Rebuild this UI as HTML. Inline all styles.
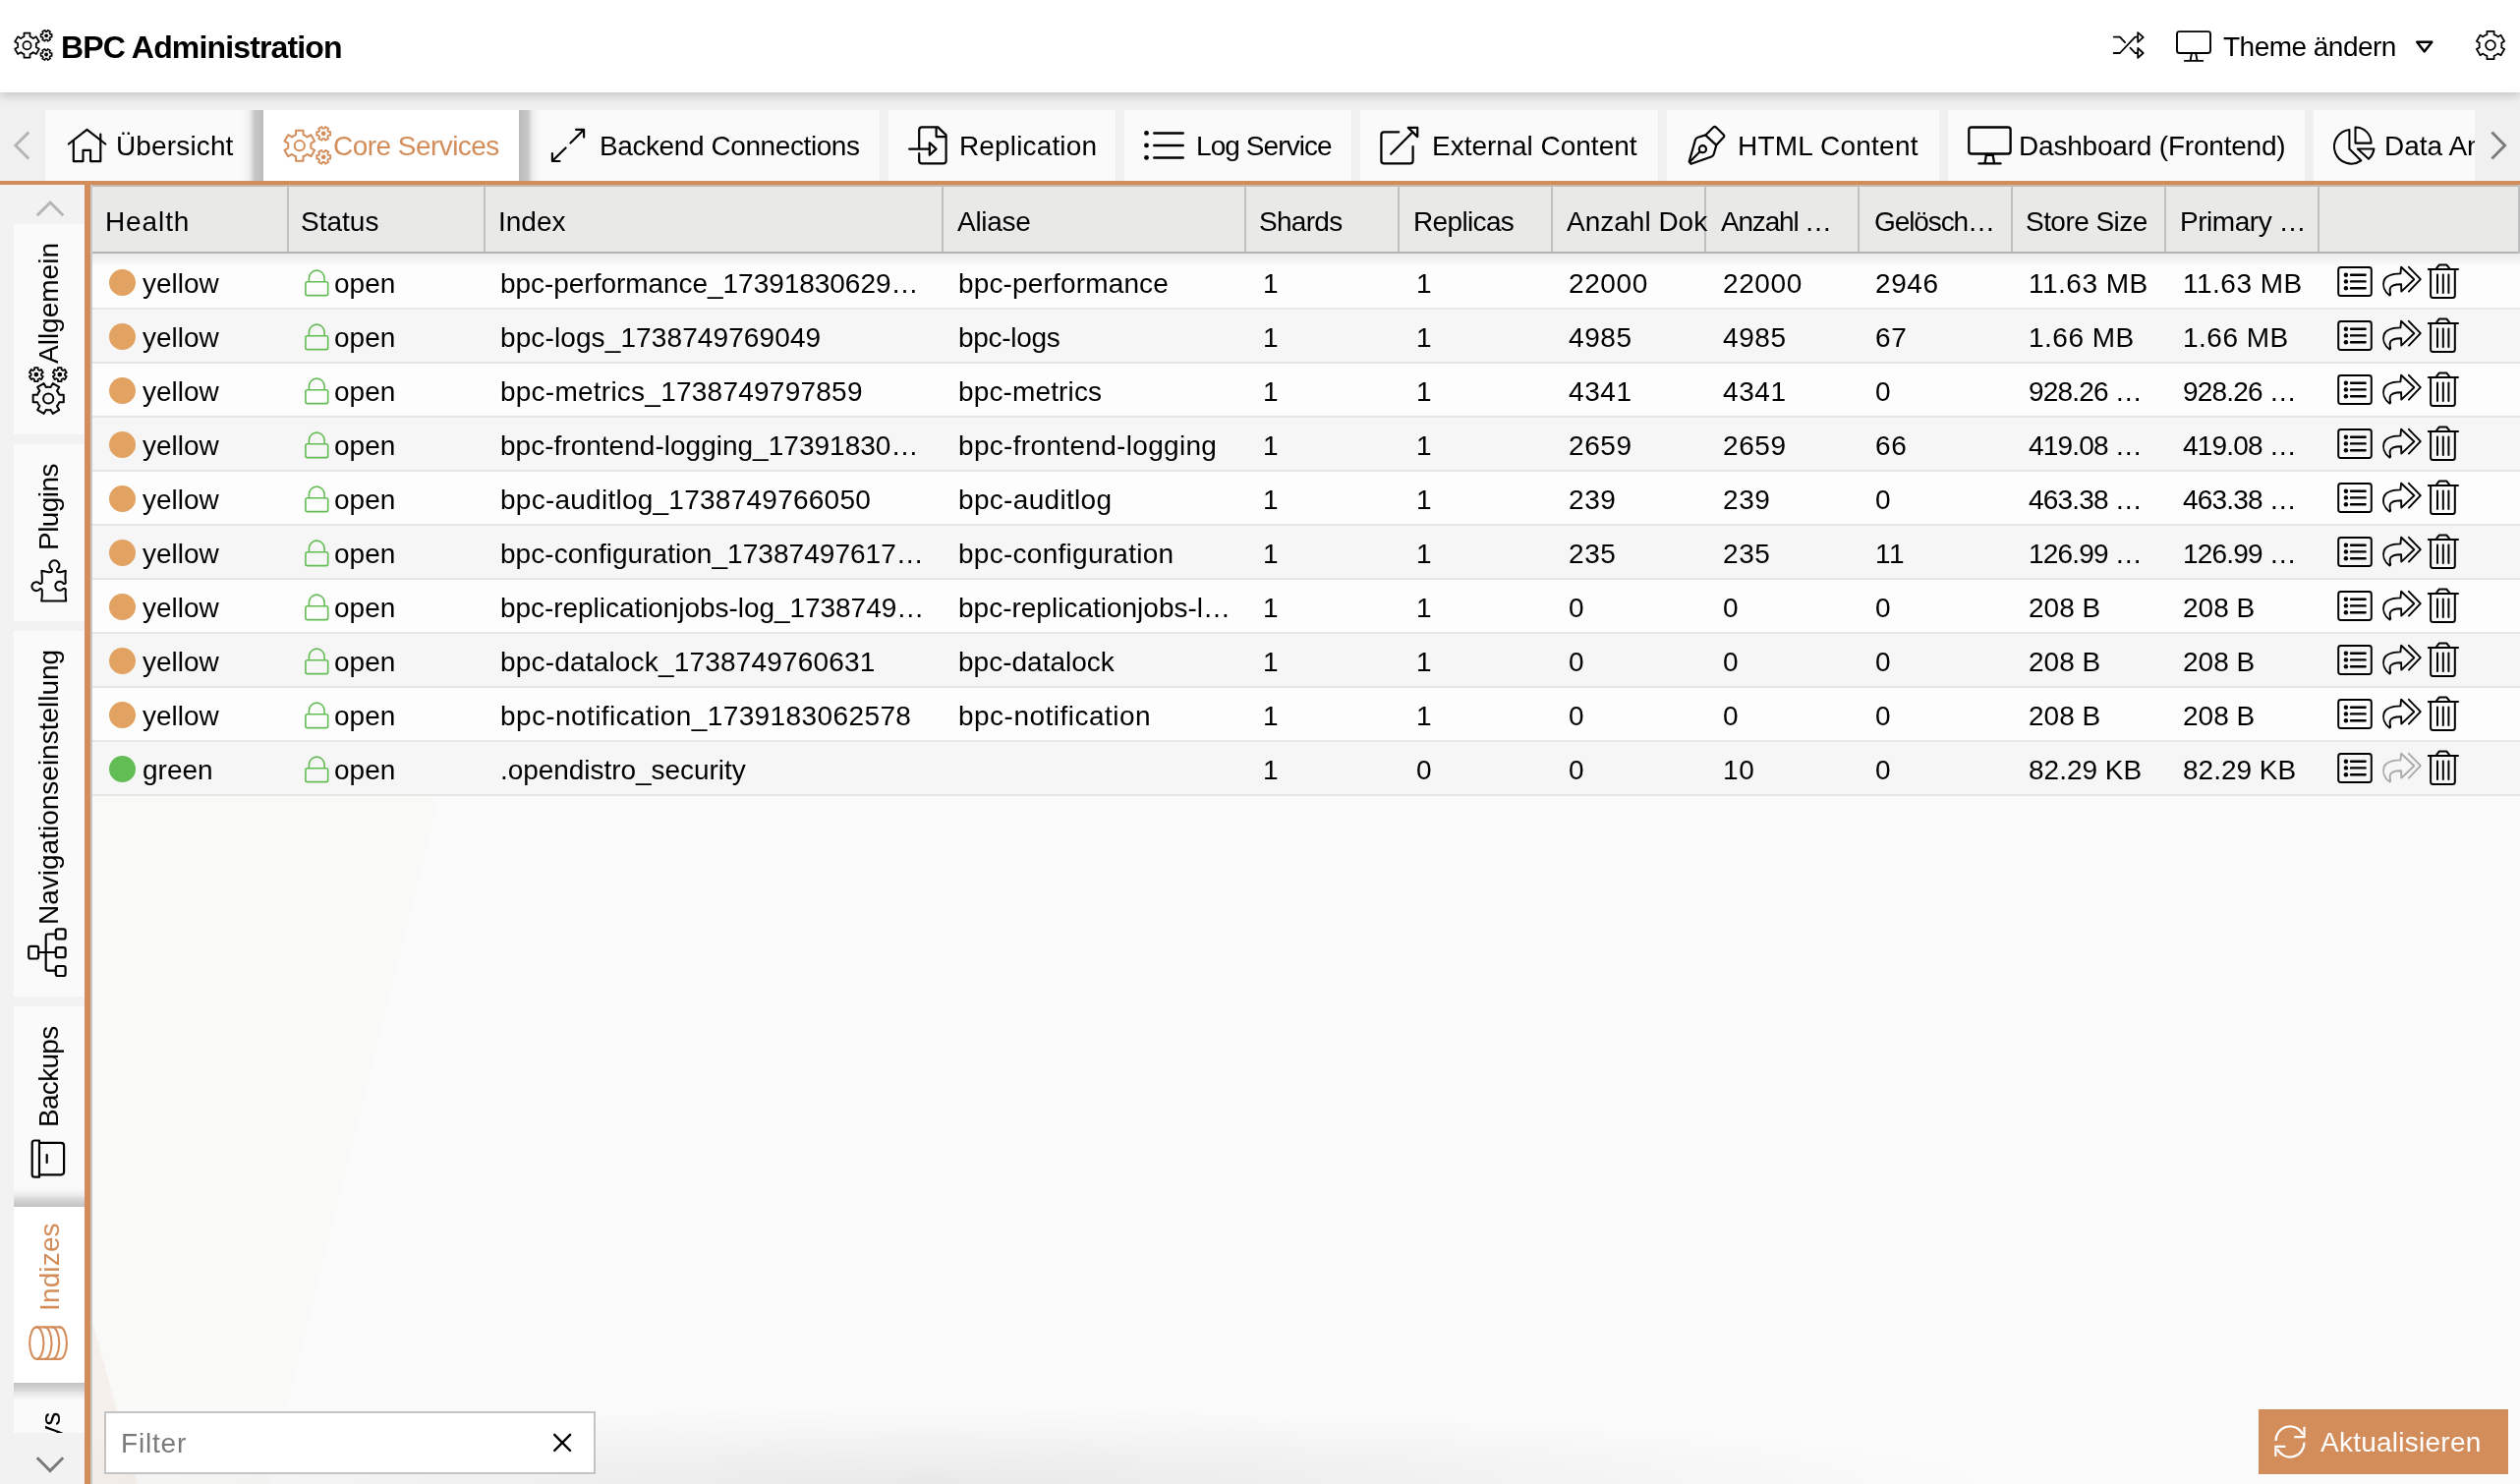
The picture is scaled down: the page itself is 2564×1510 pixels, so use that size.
<!DOCTYPE html>
<html><head><meta charset="utf-8"><style>
html,body{margin:0;padding:0;width:2564px;height:1510px;overflow:hidden;background:#fff;font-family:"Liberation Sans", sans-serif;}
body{position:relative}
div{will-change:transform}
</style></head><body>
<div style="position:absolute;left:0;top:0;width:2564px;height:94px;background:#fff;z-index:3;box-shadow:0 3px 10px rgba(0,0,0,0.2)"></div>
<div style="position:absolute;left:0;top:0;width:2564px;height:94px;z-index:4">
<div style="position:absolute;left:62px;top:31.5px;font-size:32px;line-height:32px;color:#000;font-weight:bold;white-space:nowrap;letter-spacing:-0.85px">BPC Administration</div>
<div style="position:absolute;left:2262px;top:34.3px;font-size:28px;line-height:28px;color:#000;font-weight:normal;white-space:nowrap;letter-spacing:-0.52px">Theme ändern</div>
</div>
<div style="position:absolute;left:0;top:94px;width:2564px;height:90px;background:#f0f0f0;z-index:1"></div>
<div style="position:absolute;left:0;top:94px;width:2564px;height:90px;z-index:2;overflow:hidden">
<div style="position:absolute;left:46px;top:18px;width:212px;height:72px;background:#fafafa;overflow:hidden">
<div style="position:absolute;left:72.0px;top:22.9px;font-size:28px;line-height:28px;color:#000;font-weight:normal;white-space:nowrap;letter-spacing:0.14px">Übersicht</div>
</div>
<div style="position:absolute;left:268px;top:18px;width:260px;height:72px;background:#fff;overflow:hidden">
<div style="position:absolute;left:70.5px;top:22.9px;font-size:28px;line-height:28px;color:#d38d5a;font-weight:normal;white-space:nowrap;letter-spacing:-0.54px">Core Services</div>
</div>
<div style="position:absolute;left:538px;top:18px;width:357px;height:72px;background:#fafafa;overflow:hidden">
<div style="position:absolute;left:71.5px;top:22.9px;font-size:28px;line-height:28px;color:#000;font-weight:normal;white-space:nowrap;letter-spacing:-0.41px">Backend Connections</div>
</div>
<div style="position:absolute;left:904px;top:18px;width:231px;height:72px;background:#fafafa;overflow:hidden">
<div style="position:absolute;left:71.5px;top:22.9px;font-size:28px;line-height:28px;color:#000;font-weight:normal;white-space:nowrap;letter-spacing:0.15px">Replication</div>
</div>
<div style="position:absolute;left:1144px;top:18px;width:231px;height:72px;background:#fafafa;overflow:hidden">
<div style="position:absolute;left:72.5px;top:22.9px;font-size:28px;line-height:28px;color:#000;font-weight:normal;white-space:nowrap;letter-spacing:-0.92px">Log Service</div>
</div>
<div style="position:absolute;left:1384px;top:18px;width:303px;height:72px;background:#fafafa;overflow:hidden">
<div style="position:absolute;left:72.5px;top:22.9px;font-size:28px;line-height:28px;color:#000;font-weight:normal;white-space:nowrap;letter-spacing:0.0px">External Content</div>
</div>
<div style="position:absolute;left:1696px;top:18px;width:277px;height:72px;background:#fafafa;overflow:hidden">
<div style="position:absolute;left:71.5px;top:22.9px;font-size:28px;line-height:28px;color:#000;font-weight:normal;white-space:nowrap;letter-spacing:0.22px">HTML Content</div>
</div>
<div style="position:absolute;left:1982px;top:18px;width:363px;height:72px;background:#fafafa;overflow:hidden">
<div style="position:absolute;left:71.5px;top:22.9px;font-size:28px;line-height:28px;color:#000;font-weight:normal;white-space:nowrap;letter-spacing:-0.2px">Dashboard (Frontend)</div>
</div>
<div style="position:absolute;left:2354px;top:18px;width:164px;height:72px;background:#fafafa;overflow:hidden">
<div style="position:absolute;left:71.5px;top:22.9px;font-size:28px;line-height:28px;color:#000;font-weight:normal;white-space:nowrap;letter-spacing:0px">Data Analytics</div>
</div>
<div style="position:absolute;left:246px;top:18px;width:22px;height:72px;background:linear-gradient(to left,rgba(0,0,0,0.22),rgba(0,0,0,0.16) 10px,rgba(0,0,0,0.05) 14px,rgba(0,0,0,0.0) 22px)"></div>
<div style="position:absolute;left:528px;top:18px;width:22px;height:72px;background:linear-gradient(to right,rgba(0,0,0,0.22),rgba(0,0,0,0.16) 10px,rgba(0,0,0,0.05) 14px,rgba(0,0,0,0.0) 22px)"></div>
</div>
<div style="position:absolute;left:0;top:184px;width:2564px;height:4px;background:#d38d5a;z-index:2"></div>
<div style="position:absolute;left:0;top:188px;width:86px;height:1322px;background:#f2f2f2"></div>
<div style="position:absolute;left:86px;top:188px;width:6px;height:1322px;background:#d38d5a"></div>
<div style="position:absolute;left:14px;top:228px;width:72px;height:214px;background:#fafafa;overflow:hidden">
</div>
<div style="position:absolute;left:14px;top:452px;width:72px;height:180px;background:#fafafa;overflow:hidden">
</div>
<div style="position:absolute;left:14px;top:642px;width:72px;height:372px;background:#fafafa;overflow:hidden">
</div>
<div style="position:absolute;left:14px;top:1024px;width:72px;height:194px;background:#fafafa;overflow:hidden">
</div>
<div style="position:absolute;left:14px;top:1228px;width:72px;height:179px;background:#fff;overflow:hidden">
</div>
<div style="position:absolute;left:14px;top:1416px;width:72px;height:42px;background:#fafafa;overflow:hidden">
</div>
<div style="position:absolute;left:14px;top:1210px;width:72px;height:18px;background:linear-gradient(to top,rgba(0,0,0,0.2),rgba(0,0,0,0.11) 40%,rgba(0,0,0,0))"></div>
<div style="position:absolute;left:14px;top:1407px;width:72px;height:18px;background:linear-gradient(to bottom,rgba(0,0,0,0.2),rgba(0,0,0,0.11) 40%,rgba(0,0,0,0))"></div>
<div style="position:absolute;left:36.3px;top:370px;font-size:28px;line-height:28px;color:#000;white-space:nowrap;transform-origin:0 0;transform:rotate(-90deg);">Allgemein</div>
<div style="position:absolute;left:36.3px;top:559.5px;font-size:28px;line-height:28px;color:#000;white-space:nowrap;transform-origin:0 0;transform:rotate(-90deg);letter-spacing:-0.55px">Plugins</div>
<div style="position:absolute;left:36.3px;top:940.5px;font-size:28px;line-height:28px;color:#000;white-space:nowrap;transform-origin:0 0;transform:rotate(-90deg);">Navigationseinstellung</div>
<div style="position:absolute;left:36.3px;top:1146.5px;font-size:28px;line-height:28px;color:#000;white-space:nowrap;transform-origin:0 0;transform:rotate(-90deg);letter-spacing:-0.7px">Backups</div>
<div style="position:absolute;left:37.3px;top:1333.5px;font-size:28px;line-height:28px;color:#d38d5a;white-space:nowrap;transform-origin:0 0;transform:rotate(-90deg);letter-spacing:0.15px">Indizes</div>
<div style="position:absolute;left:14px;top:1416px;width:72px;height:42px;overflow:hidden"><div style="position:absolute;left:23.8px;top:82.6px;font-size:28px;line-height:28px;color:#000;white-space:nowrap;transform-origin:0 0;transform:rotate(-90deg);">Keys</div></div>
<div style="position:absolute;left:92px;top:188px;width:2472px;height:1322px;background:#fbfbfb"></div>
<svg style="position:absolute;left:0;top:0" width="2564" height="1510"><polygon points="94,188 603,188 273,1510 94,1510" fill="#f9f9f7"/><polygon points="94,1345 140,1510 94,1510" fill="#f5f0ec"/></svg>
<div style="position:absolute;left:94px;top:1420px;width:2470px;height:90px;background:radial-gradient(ellipse 1100px 80px at 850px 100%,rgba(0,0,0,0.07),rgba(0,0,0,0))"></div>
<div style="position:absolute;left:92px;top:188px;width:2px;height:1322px;background:#c8c8c8"></div>
<div style="position:absolute;left:94px;top:188px;width:2470px;height:68px;background:#e9e9e8;border-top:2px solid #c4b8ac;box-sizing:border-box"></div>
<div style="position:absolute;left:94px;top:258px;width:2470px;height:57px;background:#fdfdfd;border-bottom:2px solid #e6e6e6;box-sizing:border-box"></div>
<div style="position:absolute;left:94px;top:315px;width:2470px;height:55px;background:#f6f6f6;border-bottom:2px solid #e6e6e6;box-sizing:border-box"></div>
<div style="position:absolute;left:94px;top:370px;width:2470px;height:55px;background:#fdfdfd;border-bottom:2px solid #e6e6e6;box-sizing:border-box"></div>
<div style="position:absolute;left:94px;top:425px;width:2470px;height:55px;background:#f6f6f6;border-bottom:2px solid #e6e6e6;box-sizing:border-box"></div>
<div style="position:absolute;left:94px;top:480px;width:2470px;height:55px;background:#fdfdfd;border-bottom:2px solid #e6e6e6;box-sizing:border-box"></div>
<div style="position:absolute;left:94px;top:535px;width:2470px;height:55px;background:#f6f6f6;border-bottom:2px solid #e6e6e6;box-sizing:border-box"></div>
<div style="position:absolute;left:94px;top:590px;width:2470px;height:55px;background:#fdfdfd;border-bottom:2px solid #e6e6e6;box-sizing:border-box"></div>
<div style="position:absolute;left:94px;top:645px;width:2470px;height:55px;background:#f6f6f6;border-bottom:2px solid #e6e6e6;box-sizing:border-box"></div>
<div style="position:absolute;left:94px;top:700px;width:2470px;height:55px;background:#fdfdfd;border-bottom:2px solid #e6e6e6;box-sizing:border-box"></div>
<div style="position:absolute;left:94px;top:755px;width:2470px;height:55px;background:#f6f6f6;border-bottom:2px solid #e6e6e6;box-sizing:border-box"></div>
<div style="position:absolute;left:94px;top:258px;width:2470px;height:14px;background:linear-gradient(to bottom,rgba(0,0,0,0.07),rgba(0,0,0,0))"></div>
<div style="position:absolute;left:94px;top:256px;width:2470px;height:2px;background:#b4b4b4"></div>
<div style="position:absolute;left:2562px;top:188px;width:2px;height:70px;background:#c0c0c0"></div>
<div style="position:absolute;left:292px;top:190px;width:2px;height:66px;background:#c0c0c0"></div>
<div style="position:absolute;left:492px;top:190px;width:2px;height:66px;background:#c0c0c0"></div>
<div style="position:absolute;left:958px;top:190px;width:2px;height:66px;background:#c0c0c0"></div>
<div style="position:absolute;left:1266px;top:190px;width:2px;height:66px;background:#c0c0c0"></div>
<div style="position:absolute;left:1422px;top:190px;width:2px;height:66px;background:#c0c0c0"></div>
<div style="position:absolute;left:1578px;top:190px;width:2px;height:66px;background:#c0c0c0"></div>
<div style="position:absolute;left:1734px;top:190px;width:2px;height:66px;background:#c0c0c0"></div>
<div style="position:absolute;left:1890px;top:190px;width:2px;height:66px;background:#c0c0c0"></div>
<div style="position:absolute;left:2046px;top:190px;width:2px;height:66px;background:#c0c0c0"></div>
<div style="position:absolute;left:2202px;top:190px;width:2px;height:66px;background:#c0c0c0"></div>
<div style="position:absolute;left:2358px;top:190px;width:2px;height:66px;background:#c0c0c0"></div>
<div style="position:absolute;left:106.8px;top:212.3px;font-size:28px;line-height:28px;color:#000;font-weight:normal;white-space:nowrap;letter-spacing:0.9px">Health</div>
<div style="position:absolute;left:306.0px;top:212.3px;font-size:28px;line-height:28px;color:#000;font-weight:normal;white-space:nowrap;letter-spacing:0px">Status</div>
<div style="position:absolute;left:506.6px;top:212.3px;font-size:28px;line-height:28px;color:#000;font-weight:normal;white-space:nowrap;letter-spacing:0px">Index</div>
<div style="position:absolute;left:973.7px;top:212.3px;font-size:28px;line-height:28px;color:#000;font-weight:normal;white-space:nowrap;letter-spacing:-0.3px">Aliase</div>
<div style="position:absolute;left:1281.3px;top:212.3px;font-size:28px;line-height:28px;color:#000;font-weight:normal;white-space:nowrap;letter-spacing:-0.7px">Shards</div>
<div style="position:absolute;left:1437.5px;top:212.3px;font-size:28px;line-height:28px;color:#000;font-weight:normal;white-space:nowrap;letter-spacing:-0.65px">Replicas</div>
<div style="position:absolute;left:1594.2px;top:212.3px;font-size:28px;line-height:28px;color:#000;font-weight:normal;white-space:nowrap;letter-spacing:0px">Anzahl Dok</div>
<div style="position:absolute;left:1750.6px;top:212.3px;font-size:28px;line-height:28px;color:#000;font-weight:normal;white-space:nowrap;letter-spacing:-1.2px">Anzahl …</div>
<div style="position:absolute;left:1906.8000000000002px;top:212.3px;font-size:28px;line-height:28px;color:#000;font-weight:normal;white-space:nowrap;letter-spacing:-1.1px">Gelösch…</div>
<div style="position:absolute;left:2061.3px;top:212.3px;font-size:28px;line-height:28px;color:#000;font-weight:normal;white-space:nowrap;letter-spacing:-0.55px">Store Size</div>
<div style="position:absolute;left:2218px;top:212.3px;font-size:28px;line-height:28px;color:#000;font-weight:normal;white-space:nowrap;letter-spacing:-0.45px">Primary …</div>
<div style="position:absolute;left:110.5px;top:274px;width:27px;height:27px;border-radius:50%;background:#e2a262"></div>
<div style="position:absolute;left:144.5px;top:275.3px;font-size:28px;line-height:28px;color:#000;font-weight:normal;white-space:nowrap;">yellow</div>
<div style="position:absolute;left:339.5px;top:275.3px;font-size:28px;line-height:28px;color:#000;font-weight:normal;white-space:nowrap;">open</div>
<div style="position:absolute;left:508.7px;top:275.3px;font-size:28px;line-height:28px;color:#000;font-weight:normal;white-space:nowrap;letter-spacing:-0.04px">bpc-performance_17391830629…</div>
<div style="position:absolute;left:975.4px;top:275.3px;font-size:28px;line-height:28px;color:#000;font-weight:normal;white-space:nowrap;letter-spacing:0.157px">bpc-performance</div>
<div style="position:absolute;left:1284.6px;top:275.3px;font-size:28px;line-height:28px;color:#000;font-weight:normal;white-space:nowrap;letter-spacing:0.6px">1</div>
<div style="position:absolute;left:1440.5px;top:275.3px;font-size:28px;line-height:28px;color:#000;font-weight:normal;white-space:nowrap;letter-spacing:0.6px">1</div>
<div style="position:absolute;left:1596.3px;top:275.3px;font-size:28px;line-height:28px;color:#000;font-weight:normal;white-space:nowrap;letter-spacing:0.6px">22000</div>
<div style="position:absolute;left:1752.5px;top:275.3px;font-size:28px;line-height:28px;color:#000;font-weight:normal;white-space:nowrap;letter-spacing:0.6px">22000</div>
<div style="position:absolute;left:1908.2px;top:275.3px;font-size:28px;line-height:28px;color:#000;font-weight:normal;white-space:nowrap;letter-spacing:0.6px">2946</div>
<div style="position:absolute;left:2064px;top:275.3px;font-size:28px;line-height:28px;color:#000;font-weight:normal;white-space:nowrap;letter-spacing:0.5px">11.63 MB</div>
<div style="position:absolute;left:2220.7px;top:275.3px;font-size:28px;line-height:28px;color:#000;font-weight:normal;white-space:nowrap;letter-spacing:0.5px">11.63 MB</div>
<div style="position:absolute;left:110.5px;top:329px;width:27px;height:27px;border-radius:50%;background:#e2a262"></div>
<div style="position:absolute;left:144.5px;top:330.3px;font-size:28px;line-height:28px;color:#000;font-weight:normal;white-space:nowrap;">yellow</div>
<div style="position:absolute;left:339.5px;top:330.3px;font-size:28px;line-height:28px;color:#000;font-weight:normal;white-space:nowrap;">open</div>
<div style="position:absolute;left:508.7px;top:330.3px;font-size:28px;line-height:28px;color:#000;font-weight:normal;white-space:nowrap;letter-spacing:0.11px">bpc-logs_1738749769049</div>
<div style="position:absolute;left:975.4px;top:330.3px;font-size:28px;line-height:28px;color:#000;font-weight:normal;white-space:nowrap;letter-spacing:-0.29px">bpc-logs</div>
<div style="position:absolute;left:1284.6px;top:330.3px;font-size:28px;line-height:28px;color:#000;font-weight:normal;white-space:nowrap;letter-spacing:0.6px">1</div>
<div style="position:absolute;left:1440.5px;top:330.3px;font-size:28px;line-height:28px;color:#000;font-weight:normal;white-space:nowrap;letter-spacing:0.6px">1</div>
<div style="position:absolute;left:1596.3px;top:330.3px;font-size:28px;line-height:28px;color:#000;font-weight:normal;white-space:nowrap;letter-spacing:0.6px">4985</div>
<div style="position:absolute;left:1752.5px;top:330.3px;font-size:28px;line-height:28px;color:#000;font-weight:normal;white-space:nowrap;letter-spacing:0.6px">4985</div>
<div style="position:absolute;left:1908.2px;top:330.3px;font-size:28px;line-height:28px;color:#000;font-weight:normal;white-space:nowrap;letter-spacing:0.6px">67</div>
<div style="position:absolute;left:2064px;top:330.3px;font-size:28px;line-height:28px;color:#000;font-weight:normal;white-space:nowrap;letter-spacing:0.5px">1.66 MB</div>
<div style="position:absolute;left:2220.7px;top:330.3px;font-size:28px;line-height:28px;color:#000;font-weight:normal;white-space:nowrap;letter-spacing:0.5px">1.66 MB</div>
<div style="position:absolute;left:110.5px;top:384px;width:27px;height:27px;border-radius:50%;background:#e2a262"></div>
<div style="position:absolute;left:144.5px;top:385.3px;font-size:28px;line-height:28px;color:#000;font-weight:normal;white-space:nowrap;">yellow</div>
<div style="position:absolute;left:339.5px;top:385.3px;font-size:28px;line-height:28px;color:#000;font-weight:normal;white-space:nowrap;">open</div>
<div style="position:absolute;left:508.7px;top:385.3px;font-size:28px;line-height:28px;color:#000;font-weight:normal;white-space:nowrap;letter-spacing:0.24px">bpc-metrics_1738749797859</div>
<div style="position:absolute;left:975.4px;top:385.3px;font-size:28px;line-height:28px;color:#000;font-weight:normal;white-space:nowrap;letter-spacing:0.14px">bpc-metrics</div>
<div style="position:absolute;left:1284.6px;top:385.3px;font-size:28px;line-height:28px;color:#000;font-weight:normal;white-space:nowrap;letter-spacing:0.6px">1</div>
<div style="position:absolute;left:1440.5px;top:385.3px;font-size:28px;line-height:28px;color:#000;font-weight:normal;white-space:nowrap;letter-spacing:0.6px">1</div>
<div style="position:absolute;left:1596.3px;top:385.3px;font-size:28px;line-height:28px;color:#000;font-weight:normal;white-space:nowrap;letter-spacing:0.6px">4341</div>
<div style="position:absolute;left:1752.5px;top:385.3px;font-size:28px;line-height:28px;color:#000;font-weight:normal;white-space:nowrap;letter-spacing:0.6px">4341</div>
<div style="position:absolute;left:1908.2px;top:385.3px;font-size:28px;line-height:28px;color:#000;font-weight:normal;white-space:nowrap;letter-spacing:0.6px">0</div>
<div style="position:absolute;left:2064px;top:385.3px;font-size:28px;line-height:28px;color:#000;font-weight:normal;white-space:nowrap;letter-spacing:-0.8px">928.26 …</div>
<div style="position:absolute;left:2220.7px;top:385.3px;font-size:28px;line-height:28px;color:#000;font-weight:normal;white-space:nowrap;letter-spacing:-0.8px">928.26 …</div>
<div style="position:absolute;left:110.5px;top:439px;width:27px;height:27px;border-radius:50%;background:#e2a262"></div>
<div style="position:absolute;left:144.5px;top:440.3px;font-size:28px;line-height:28px;color:#000;font-weight:normal;white-space:nowrap;">yellow</div>
<div style="position:absolute;left:339.5px;top:440.3px;font-size:28px;line-height:28px;color:#000;font-weight:normal;white-space:nowrap;">open</div>
<div style="position:absolute;left:508.7px;top:440.3px;font-size:28px;line-height:28px;color:#000;font-weight:normal;white-space:nowrap;letter-spacing:0.014px">bpc-frontend-logging_17391830…</div>
<div style="position:absolute;left:975.4px;top:440.3px;font-size:28px;line-height:28px;color:#000;font-weight:normal;white-space:nowrap;letter-spacing:0.32px">bpc-frontend-logging</div>
<div style="position:absolute;left:1284.6px;top:440.3px;font-size:28px;line-height:28px;color:#000;font-weight:normal;white-space:nowrap;letter-spacing:0.6px">1</div>
<div style="position:absolute;left:1440.5px;top:440.3px;font-size:28px;line-height:28px;color:#000;font-weight:normal;white-space:nowrap;letter-spacing:0.6px">1</div>
<div style="position:absolute;left:1596.3px;top:440.3px;font-size:28px;line-height:28px;color:#000;font-weight:normal;white-space:nowrap;letter-spacing:0.6px">2659</div>
<div style="position:absolute;left:1752.5px;top:440.3px;font-size:28px;line-height:28px;color:#000;font-weight:normal;white-space:nowrap;letter-spacing:0.6px">2659</div>
<div style="position:absolute;left:1908.2px;top:440.3px;font-size:28px;line-height:28px;color:#000;font-weight:normal;white-space:nowrap;letter-spacing:0.6px">66</div>
<div style="position:absolute;left:2064px;top:440.3px;font-size:28px;line-height:28px;color:#000;font-weight:normal;white-space:nowrap;letter-spacing:-0.8px">419.08 …</div>
<div style="position:absolute;left:2220.7px;top:440.3px;font-size:28px;line-height:28px;color:#000;font-weight:normal;white-space:nowrap;letter-spacing:-0.8px">419.08 …</div>
<div style="position:absolute;left:110.5px;top:494px;width:27px;height:27px;border-radius:50%;background:#e2a262"></div>
<div style="position:absolute;left:144.5px;top:495.3px;font-size:28px;line-height:28px;color:#000;font-weight:normal;white-space:nowrap;">yellow</div>
<div style="position:absolute;left:339.5px;top:495.3px;font-size:28px;line-height:28px;color:#000;font-weight:normal;white-space:nowrap;">open</div>
<div style="position:absolute;left:508.7px;top:495.3px;font-size:28px;line-height:28px;color:#000;font-weight:normal;white-space:nowrap;letter-spacing:0.25px">bpc-auditlog_1738749766050</div>
<div style="position:absolute;left:975.4px;top:495.3px;font-size:28px;line-height:28px;color:#000;font-weight:normal;white-space:nowrap;letter-spacing:0.32px">bpc-auditlog</div>
<div style="position:absolute;left:1284.6px;top:495.3px;font-size:28px;line-height:28px;color:#000;font-weight:normal;white-space:nowrap;letter-spacing:0.6px">1</div>
<div style="position:absolute;left:1440.5px;top:495.3px;font-size:28px;line-height:28px;color:#000;font-weight:normal;white-space:nowrap;letter-spacing:0.6px">1</div>
<div style="position:absolute;left:1596.3px;top:495.3px;font-size:28px;line-height:28px;color:#000;font-weight:normal;white-space:nowrap;letter-spacing:0.6px">239</div>
<div style="position:absolute;left:1752.5px;top:495.3px;font-size:28px;line-height:28px;color:#000;font-weight:normal;white-space:nowrap;letter-spacing:0.6px">239</div>
<div style="position:absolute;left:1908.2px;top:495.3px;font-size:28px;line-height:28px;color:#000;font-weight:normal;white-space:nowrap;letter-spacing:0.6px">0</div>
<div style="position:absolute;left:2064px;top:495.3px;font-size:28px;line-height:28px;color:#000;font-weight:normal;white-space:nowrap;letter-spacing:-0.8px">463.38 …</div>
<div style="position:absolute;left:2220.7px;top:495.3px;font-size:28px;line-height:28px;color:#000;font-weight:normal;white-space:nowrap;letter-spacing:-0.8px">463.38 …</div>
<div style="position:absolute;left:110.5px;top:549px;width:27px;height:27px;border-radius:50%;background:#e2a262"></div>
<div style="position:absolute;left:144.5px;top:550.3px;font-size:28px;line-height:28px;color:#000;font-weight:normal;white-space:nowrap;">yellow</div>
<div style="position:absolute;left:339.5px;top:550.3px;font-size:28px;line-height:28px;color:#000;font-weight:normal;white-space:nowrap;">open</div>
<div style="position:absolute;left:508.7px;top:550.3px;font-size:28px;line-height:28px;color:#000;font-weight:normal;white-space:nowrap;letter-spacing:0.04px">bpc-configuration_17387497617…</div>
<div style="position:absolute;left:975.4px;top:550.3px;font-size:28px;line-height:28px;color:#000;font-weight:normal;white-space:nowrap;letter-spacing:0.27px">bpc-configuration</div>
<div style="position:absolute;left:1284.6px;top:550.3px;font-size:28px;line-height:28px;color:#000;font-weight:normal;white-space:nowrap;letter-spacing:0.6px">1</div>
<div style="position:absolute;left:1440.5px;top:550.3px;font-size:28px;line-height:28px;color:#000;font-weight:normal;white-space:nowrap;letter-spacing:0.6px">1</div>
<div style="position:absolute;left:1596.3px;top:550.3px;font-size:28px;line-height:28px;color:#000;font-weight:normal;white-space:nowrap;letter-spacing:0.6px">235</div>
<div style="position:absolute;left:1752.5px;top:550.3px;font-size:28px;line-height:28px;color:#000;font-weight:normal;white-space:nowrap;letter-spacing:0.6px">235</div>
<div style="position:absolute;left:1908.2px;top:550.3px;font-size:28px;line-height:28px;color:#000;font-weight:normal;white-space:nowrap;letter-spacing:0.6px">11</div>
<div style="position:absolute;left:2064px;top:550.3px;font-size:28px;line-height:28px;color:#000;font-weight:normal;white-space:nowrap;letter-spacing:-0.8px">126.99 …</div>
<div style="position:absolute;left:2220.7px;top:550.3px;font-size:28px;line-height:28px;color:#000;font-weight:normal;white-space:nowrap;letter-spacing:-0.8px">126.99 …</div>
<div style="position:absolute;left:110.5px;top:604px;width:27px;height:27px;border-radius:50%;background:#e2a262"></div>
<div style="position:absolute;left:144.5px;top:605.3px;font-size:28px;line-height:28px;color:#000;font-weight:normal;white-space:nowrap;">yellow</div>
<div style="position:absolute;left:339.5px;top:605.3px;font-size:28px;line-height:28px;color:#000;font-weight:normal;white-space:nowrap;">open</div>
<div style="position:absolute;left:508.7px;top:605.3px;font-size:28px;line-height:28px;color:#000;font-weight:normal;white-space:nowrap;letter-spacing:-0.05px">bpc-replicationjobs-log_1738749…</div>
<div style="position:absolute;left:975.4px;top:605.3px;font-size:28px;line-height:28px;color:#000;font-weight:normal;white-space:nowrap;letter-spacing:0px">bpc-replicationjobs-l…</div>
<div style="position:absolute;left:1284.6px;top:605.3px;font-size:28px;line-height:28px;color:#000;font-weight:normal;white-space:nowrap;letter-spacing:0.6px">1</div>
<div style="position:absolute;left:1440.5px;top:605.3px;font-size:28px;line-height:28px;color:#000;font-weight:normal;white-space:nowrap;letter-spacing:0.6px">1</div>
<div style="position:absolute;left:1596.3px;top:605.3px;font-size:28px;line-height:28px;color:#000;font-weight:normal;white-space:nowrap;letter-spacing:0.6px">0</div>
<div style="position:absolute;left:1752.5px;top:605.3px;font-size:28px;line-height:28px;color:#000;font-weight:normal;white-space:nowrap;letter-spacing:0.6px">0</div>
<div style="position:absolute;left:1908.2px;top:605.3px;font-size:28px;line-height:28px;color:#000;font-weight:normal;white-space:nowrap;letter-spacing:0.6px">0</div>
<div style="position:absolute;left:2064px;top:605.3px;font-size:28px;line-height:28px;color:#000;font-weight:normal;white-space:nowrap;letter-spacing:0px">208 B</div>
<div style="position:absolute;left:2220.7px;top:605.3px;font-size:28px;line-height:28px;color:#000;font-weight:normal;white-space:nowrap;letter-spacing:0px">208 B</div>
<div style="position:absolute;left:110.5px;top:659px;width:27px;height:27px;border-radius:50%;background:#e2a262"></div>
<div style="position:absolute;left:144.5px;top:660.3px;font-size:28px;line-height:28px;color:#000;font-weight:normal;white-space:nowrap;">yellow</div>
<div style="position:absolute;left:339.5px;top:660.3px;font-size:28px;line-height:28px;color:#000;font-weight:normal;white-space:nowrap;">open</div>
<div style="position:absolute;left:508.7px;top:660.3px;font-size:28px;line-height:28px;color:#000;font-weight:normal;white-space:nowrap;letter-spacing:0.18px">bpc-datalock_1738749760631</div>
<div style="position:absolute;left:975.4px;top:660.3px;font-size:28px;line-height:28px;color:#000;font-weight:normal;white-space:nowrap;letter-spacing:0.01px">bpc-datalock</div>
<div style="position:absolute;left:1284.6px;top:660.3px;font-size:28px;line-height:28px;color:#000;font-weight:normal;white-space:nowrap;letter-spacing:0.6px">1</div>
<div style="position:absolute;left:1440.5px;top:660.3px;font-size:28px;line-height:28px;color:#000;font-weight:normal;white-space:nowrap;letter-spacing:0.6px">1</div>
<div style="position:absolute;left:1596.3px;top:660.3px;font-size:28px;line-height:28px;color:#000;font-weight:normal;white-space:nowrap;letter-spacing:0.6px">0</div>
<div style="position:absolute;left:1752.5px;top:660.3px;font-size:28px;line-height:28px;color:#000;font-weight:normal;white-space:nowrap;letter-spacing:0.6px">0</div>
<div style="position:absolute;left:1908.2px;top:660.3px;font-size:28px;line-height:28px;color:#000;font-weight:normal;white-space:nowrap;letter-spacing:0.6px">0</div>
<div style="position:absolute;left:2064px;top:660.3px;font-size:28px;line-height:28px;color:#000;font-weight:normal;white-space:nowrap;letter-spacing:0px">208 B</div>
<div style="position:absolute;left:2220.7px;top:660.3px;font-size:28px;line-height:28px;color:#000;font-weight:normal;white-space:nowrap;letter-spacing:0px">208 B</div>
<div style="position:absolute;left:110.5px;top:714px;width:27px;height:27px;border-radius:50%;background:#e2a262"></div>
<div style="position:absolute;left:144.5px;top:715.3px;font-size:28px;line-height:28px;color:#000;font-weight:normal;white-space:nowrap;">yellow</div>
<div style="position:absolute;left:339.5px;top:715.3px;font-size:28px;line-height:28px;color:#000;font-weight:normal;white-space:nowrap;">open</div>
<div style="position:absolute;left:508.7px;top:715.3px;font-size:28px;line-height:28px;color:#000;font-weight:normal;white-space:nowrap;letter-spacing:0.4px">bpc-notification_1739183062578</div>
<div style="position:absolute;left:975.4px;top:715.3px;font-size:28px;line-height:28px;color:#000;font-weight:normal;white-space:nowrap;letter-spacing:0.48px">bpc-notification</div>
<div style="position:absolute;left:1284.6px;top:715.3px;font-size:28px;line-height:28px;color:#000;font-weight:normal;white-space:nowrap;letter-spacing:0.6px">1</div>
<div style="position:absolute;left:1440.5px;top:715.3px;font-size:28px;line-height:28px;color:#000;font-weight:normal;white-space:nowrap;letter-spacing:0.6px">1</div>
<div style="position:absolute;left:1596.3px;top:715.3px;font-size:28px;line-height:28px;color:#000;font-weight:normal;white-space:nowrap;letter-spacing:0.6px">0</div>
<div style="position:absolute;left:1752.5px;top:715.3px;font-size:28px;line-height:28px;color:#000;font-weight:normal;white-space:nowrap;letter-spacing:0.6px">0</div>
<div style="position:absolute;left:1908.2px;top:715.3px;font-size:28px;line-height:28px;color:#000;font-weight:normal;white-space:nowrap;letter-spacing:0.6px">0</div>
<div style="position:absolute;left:2064px;top:715.3px;font-size:28px;line-height:28px;color:#000;font-weight:normal;white-space:nowrap;letter-spacing:0px">208 B</div>
<div style="position:absolute;left:2220.7px;top:715.3px;font-size:28px;line-height:28px;color:#000;font-weight:normal;white-space:nowrap;letter-spacing:0px">208 B</div>
<div style="position:absolute;left:110.5px;top:769px;width:27px;height:27px;border-radius:50%;background:#62bd55"></div>
<div style="position:absolute;left:144.5px;top:770.3px;font-size:28px;line-height:28px;color:#000;font-weight:normal;white-space:nowrap;">green</div>
<div style="position:absolute;left:339.5px;top:770.3px;font-size:28px;line-height:28px;color:#000;font-weight:normal;white-space:nowrap;">open</div>
<div style="position:absolute;left:508.7px;top:770.3px;font-size:28px;line-height:28px;color:#000;font-weight:normal;white-space:nowrap;letter-spacing:-0.05px">.opendistro_security</div>
<div style="position:absolute;left:1284.6px;top:770.3px;font-size:28px;line-height:28px;color:#000;font-weight:normal;white-space:nowrap;letter-spacing:0.6px">1</div>
<div style="position:absolute;left:1440.5px;top:770.3px;font-size:28px;line-height:28px;color:#000;font-weight:normal;white-space:nowrap;letter-spacing:0.6px">0</div>
<div style="position:absolute;left:1596.3px;top:770.3px;font-size:28px;line-height:28px;color:#000;font-weight:normal;white-space:nowrap;letter-spacing:0.6px">0</div>
<div style="position:absolute;left:1752.5px;top:770.3px;font-size:28px;line-height:28px;color:#000;font-weight:normal;white-space:nowrap;letter-spacing:0.6px">10</div>
<div style="position:absolute;left:1908.2px;top:770.3px;font-size:28px;line-height:28px;color:#000;font-weight:normal;white-space:nowrap;letter-spacing:0.6px">0</div>
<div style="position:absolute;left:2064px;top:770.3px;font-size:28px;line-height:28px;color:#000;font-weight:normal;white-space:nowrap;letter-spacing:0px">82.29 KB</div>
<div style="position:absolute;left:2220.7px;top:770.3px;font-size:28px;line-height:28px;color:#000;font-weight:normal;white-space:nowrap;letter-spacing:0px">82.29 KB</div>
<div style="position:absolute;left:106px;top:1436px;width:500px;height:64px;background:#fff;border:2px solid #c4c4c4;box-sizing:border-box"></div>
<div style="position:absolute;left:123px;top:1455.3px;font-size:28px;line-height:28px;color:#7a7a7a;font-weight:normal;white-space:nowrap;letter-spacing:0.8px">Filter</div>
<div style="position:absolute;left:2298px;top:1434px;width:254px;height:66px;background:#d38d5a"></div>
<div style="position:absolute;left:2361px;top:1454.3px;font-size:28px;line-height:28px;color:#fff;font-weight:normal;white-space:nowrap;letter-spacing:0.25px">Aktualisieren</div>
<svg style="position:absolute;left:0;top:0;z-index:50;pointer-events:none" width="2564" height="1510" viewBox="0 0 2564 1510">
<g transform="translate(27.5,46.2) rotate(0) scale(1.0)" fill="none" stroke="#000" stroke-width="1.75" stroke-linejoin="round"><path d="M-3.00,-8.91 L-3.00,-12.50 L3.00,-12.50 L3.00,-8.91 A9.4,9.4 0 0 1 6.21,-7.05 L9.33,-8.85 L12.33,-3.65 L9.21,-1.86 A9.4,9.4 0 0 1 9.21,1.86 L12.33,3.65 L9.33,8.85 L6.21,7.05 A9.4,9.4 0 0 1 3.00,8.91 L3.00,12.50 L-3.00,12.50 L-3.00,8.91 A9.4,9.4 0 0 1 -6.21,7.05 L-9.33,8.85 L-12.33,3.65 L-9.21,1.86 A9.4,9.4 0 0 1 -9.21,-1.86 L-12.33,-3.65 L-9.33,-8.85 L-6.21,-7.05 A9.4,9.4 0 0 1 -3.00,-8.91 Z"/><circle cx="0" cy="0" r="4.1"/><path transform="translate(19.6,-9.9)" d="M3.94,-1.45 L5.60,-1.45 L5.60,1.45 L3.94,1.45 A4.2,4.2 0 0 1 3.23,2.69 L4.06,4.12 L1.54,5.57 L0.72,4.14 A4.2,4.2 0 0 1 -0.72,4.14 L-1.54,5.57 L-4.06,4.12 L-3.23,2.69 A4.2,4.2 0 0 1 -3.94,1.45 L-5.60,1.45 L-5.60,-1.45 L-3.94,-1.45 A4.2,4.2 0 0 1 -3.23,-2.69 L-4.06,-4.12 L-1.54,-5.57 L-0.72,-4.14 A4.2,4.2 0 0 1 0.72,-4.14 L1.54,-5.57 L4.06,-4.12 L3.23,-2.69 A4.2,4.2 0 0 1 3.94,-1.45 Z" stroke-width="1.575"/><path transform="translate(19.6,9.3)" d="M3.94,-1.45 L5.60,-1.45 L5.60,1.45 L3.94,1.45 A4.2,4.2 0 0 1 3.23,2.69 L4.06,4.12 L1.54,5.57 L0.72,4.14 A4.2,4.2 0 0 1 -0.72,4.14 L-1.54,5.57 L-4.06,4.12 L-3.23,2.69 A4.2,4.2 0 0 1 -3.94,1.45 L-5.60,1.45 L-5.60,-1.45 L-3.94,-1.45 A4.2,4.2 0 0 1 -3.23,-2.69 L-4.06,-4.12 L-1.54,-5.57 L-0.72,-4.14 A4.2,4.2 0 0 1 0.72,-4.14 L1.54,-5.57 L4.06,-4.12 L3.23,-2.69 A4.2,4.2 0 0 1 3.94,-1.45 Z" stroke-width="1.575"/><circle cx="19.6" cy="-9.9" r="1.9" fill="#000" stroke="none"/><circle cx="19.6" cy="9.3" r="1.9" fill="#000" stroke="none"/></g>
<g transform="translate(304.8,148.2) rotate(0) scale(1.245)" fill="none" stroke="#d38d5a" stroke-width="1.6" stroke-linejoin="round"><path d="M-3.00,-8.91 L-3.00,-12.50 L3.00,-12.50 L3.00,-8.91 A9.4,9.4 0 0 1 6.21,-7.05 L9.33,-8.85 L12.33,-3.65 L9.21,-1.86 A9.4,9.4 0 0 1 9.21,1.86 L12.33,3.65 L9.33,8.85 L6.21,7.05 A9.4,9.4 0 0 1 3.00,8.91 L3.00,12.50 L-3.00,12.50 L-3.00,8.91 A9.4,9.4 0 0 1 -6.21,7.05 L-9.33,8.85 L-12.33,3.65 L-9.21,1.86 A9.4,9.4 0 0 1 -9.21,-1.86 L-12.33,-3.65 L-9.33,-8.85 L-6.21,-7.05 A9.4,9.4 0 0 1 -3.00,-8.91 Z"/><circle cx="0" cy="0" r="4.1"/><path transform="translate(19.6,-9.9)" d="M3.94,-1.45 L5.60,-1.45 L5.60,1.45 L3.94,1.45 A4.2,4.2 0 0 1 3.23,2.69 L4.06,4.12 L1.54,5.57 L0.72,4.14 A4.2,4.2 0 0 1 -0.72,4.14 L-1.54,5.57 L-4.06,4.12 L-3.23,2.69 A4.2,4.2 0 0 1 -3.94,1.45 L-5.60,1.45 L-5.60,-1.45 L-3.94,-1.45 A4.2,4.2 0 0 1 -3.23,-2.69 L-4.06,-4.12 L-1.54,-5.57 L-0.72,-4.14 A4.2,4.2 0 0 1 0.72,-4.14 L1.54,-5.57 L4.06,-4.12 L3.23,-2.69 A4.2,4.2 0 0 1 3.94,-1.45 Z" stroke-width="1.4400000000000002"/><path transform="translate(19.6,9.3)" d="M3.94,-1.45 L5.60,-1.45 L5.60,1.45 L3.94,1.45 A4.2,4.2 0 0 1 3.23,2.69 L4.06,4.12 L1.54,5.57 L0.72,4.14 A4.2,4.2 0 0 1 -0.72,4.14 L-1.54,5.57 L-4.06,4.12 L-3.23,2.69 A4.2,4.2 0 0 1 -3.94,1.45 L-5.60,1.45 L-5.60,-1.45 L-3.94,-1.45 A4.2,4.2 0 0 1 -3.23,-2.69 L-4.06,-4.12 L-1.54,-5.57 L-0.72,-4.14 A4.2,4.2 0 0 1 0.72,-4.14 L1.54,-5.57 L4.06,-4.12 L3.23,-2.69 A4.2,4.2 0 0 1 3.94,-1.45 Z" stroke-width="1.4400000000000002"/><circle cx="19.6" cy="-9.9" r="1.9" fill="#d38d5a" stroke="none"/><circle cx="19.6" cy="9.3" r="1.9" fill="#d38d5a" stroke="none"/></g>
<g transform="translate(49.2,405.5) rotate(-90) scale(1.245)" fill="none" stroke="#000" stroke-width="1.6" stroke-linejoin="round"><path d="M-3.00,-8.91 L-3.00,-12.50 L3.00,-12.50 L3.00,-8.91 A9.4,9.4 0 0 1 6.21,-7.05 L9.33,-8.85 L12.33,-3.65 L9.21,-1.86 A9.4,9.4 0 0 1 9.21,1.86 L12.33,3.65 L9.33,8.85 L6.21,7.05 A9.4,9.4 0 0 1 3.00,8.91 L3.00,12.50 L-3.00,12.50 L-3.00,8.91 A9.4,9.4 0 0 1 -6.21,7.05 L-9.33,8.85 L-12.33,3.65 L-9.21,1.86 A9.4,9.4 0 0 1 -9.21,-1.86 L-12.33,-3.65 L-9.33,-8.85 L-6.21,-7.05 A9.4,9.4 0 0 1 -3.00,-8.91 Z"/><circle cx="0" cy="0" r="4.1"/><path transform="translate(19.6,-9.9)" d="M3.94,-1.45 L5.60,-1.45 L5.60,1.45 L3.94,1.45 A4.2,4.2 0 0 1 3.23,2.69 L4.06,4.12 L1.54,5.57 L0.72,4.14 A4.2,4.2 0 0 1 -0.72,4.14 L-1.54,5.57 L-4.06,4.12 L-3.23,2.69 A4.2,4.2 0 0 1 -3.94,1.45 L-5.60,1.45 L-5.60,-1.45 L-3.94,-1.45 A4.2,4.2 0 0 1 -3.23,-2.69 L-4.06,-4.12 L-1.54,-5.57 L-0.72,-4.14 A4.2,4.2 0 0 1 0.72,-4.14 L1.54,-5.57 L4.06,-4.12 L3.23,-2.69 A4.2,4.2 0 0 1 3.94,-1.45 Z" stroke-width="1.4400000000000002"/><path transform="translate(19.6,9.3)" d="M3.94,-1.45 L5.60,-1.45 L5.60,1.45 L3.94,1.45 A4.2,4.2 0 0 1 3.23,2.69 L4.06,4.12 L1.54,5.57 L0.72,4.14 A4.2,4.2 0 0 1 -0.72,4.14 L-1.54,5.57 L-4.06,4.12 L-3.23,2.69 A4.2,4.2 0 0 1 -3.94,1.45 L-5.60,1.45 L-5.60,-1.45 L-3.94,-1.45 A4.2,4.2 0 0 1 -3.23,-2.69 L-4.06,-4.12 L-1.54,-5.57 L-0.72,-4.14 A4.2,4.2 0 0 1 0.72,-4.14 L1.54,-5.57 L4.06,-4.12 L3.23,-2.69 A4.2,4.2 0 0 1 3.94,-1.45 Z" stroke-width="1.4400000000000002"/><circle cx="19.6" cy="-9.9" r="1.9" fill="#000" stroke="none"/><circle cx="19.6" cy="9.3" r="1.9" fill="#000" stroke="none"/></g>
<g fill="none" stroke="#000" stroke-linecap="round" stroke-linejoin="round" stroke-width="1.8"><path d="M2150.7,37.6 H2156.9 L2162.1,43.1"/><path d="M2150.7,54 H2156.9 L2172.4,37.6 H2174.8"/><path d="M2167.4,48.6 L2172.4,54 H2174.8"/><path d="M2175.2,33.1 L2180.7,37.9 L2175.2,42.9 Z"/><path d="M2175.2,49 L2180.7,54 L2175.2,58.8 Z"/></g>
<g fill="none" stroke="#000" stroke-linecap="round" stroke-linejoin="round" stroke-width="1.9"><rect x="2215" y="32.1" width="34" height="21.9" rx="2.4"/><path d="M2229.8,54.8 L2228.6,61.6 M2234.3,54.8 L2235.5,61.6 M2222.9,61.9 H2241.2"/></g>
<path fill="none" stroke="#000" stroke-linecap="round" stroke-linejoin="round" stroke-width="2.4" d="M2459.2,42.7 H2474.3 L2466.7,52.4 Z"/>
<g transform="translate(2534,46)" fill="none" stroke="#000" stroke-width="1.75" stroke-linejoin="round"><path d="M-3.60,-10.82 L-3.60,-14.20 L3.60,-14.20 L3.60,-10.82 A11.4,11.4 0 0 1 7.57,-8.53 L10.50,-10.22 L14.10,-3.98 L11.17,-2.29 A11.4,11.4 0 0 1 11.17,2.29 L14.10,3.98 L10.50,10.22 L7.57,8.53 A11.4,11.4 0 0 1 3.60,10.82 L3.60,14.20 L-3.60,14.20 L-3.60,10.82 A11.4,11.4 0 0 1 -7.57,8.53 L-10.50,10.22 L-14.10,3.98 L-11.17,2.29 A11.4,11.4 0 0 1 -11.17,-2.29 L-14.10,-3.98 L-10.50,-10.22 L-7.57,-8.53 A11.4,11.4 0 0 1 -3.60,-10.82 Z"/><circle r="4.9"/></g>
<path d="M28.2,135.6 L15.8,148 L28.2,160.4" fill="none" stroke="#b4b4b4" stroke-width="2.9" stroke-linecap="square"/>
<path d="M2536.4,135.6 L2548.6,148 L2536.4,160.4" fill="none" stroke="#7a7a7a" stroke-width="2.9" stroke-linecap="square"/>
<path d="M38.8,218.2 L51.1,206 L63.3,218.2" fill="none" stroke="#b4b4b4" stroke-width="2.9" stroke-linecap="square"/>
<path d="M38.8,1484.2 L51,1496.6 L63.2,1484.2" fill="none" stroke="#7a7a7a" stroke-width="2.9" stroke-linecap="square"/>
<g fill="none" stroke="#000" stroke-linecap="round" stroke-linejoin="round" stroke-width="2.15"><path d="M69.8,146.5 L88.5,131.9 L107.3,146.5"/><path d="M102.3,136.5 V142.5"/><path d="M74.8,143 V164.1 H84.5 V152.8 H92.1 V164.1 H102.3 V143"/></g>
<g fill="none" stroke="#000" stroke-linecap="round" stroke-linejoin="round" stroke-width="2.15"><path d="M580.4,145.6 L593.5,132.5"/><path d="M586.1,131.9 H594.1 V139.6"/><path d="M575.6,150.4 L562.5,163.3"/><path d="M561.9,156.1 V164 H569.5"/></g>
<g fill="none" stroke="#000" stroke-linecap="round" stroke-linejoin="round" stroke-width="2.2"><path d="M935.2,150.2 V132.4 Q935.2,129.4 938.2,129.4 H954.3 L962.6,137.4 V163.4 Q962.6,166.4 959.6,166.4 H938.2 Q935.2,166.4 935.2,163.4 V156.2"/><path d="M952.6,129.8 V139.1 H962.3"/><path d="M925.2,151.7 H945.4"/><path d="M945.8,145.3 L952.6,151.6 L945.8,157.8 Z"/></g>
<g fill="none" stroke="#000" stroke-linecap="round" stroke-linejoin="round" stroke-width="2.5"><path d="M1174.3,135.4 H1203.7 M1174.3,147.9 H1203.7 M1174.3,160.4 H1203.7"/></g>
<g fill="#000"><circle cx="1166.5" cy="135.4" r="2.4"/><circle cx="1166.5" cy="147.9" r="2.4"/><circle cx="1166.5" cy="160.4" r="2.4"/></g>
<g fill="none" stroke="#000" stroke-linecap="round" stroke-linejoin="round" stroke-width="2.25"><path d="M1423.2,134.3 H1408.2 Q1405.4,134.3 1405.4,137.1 V163.5 Q1405.4,166.3 1408.2,166.3 H1434.8 Q1437.6,166.3 1437.6,163.5 V149"/><path d="M1415.2,156.7 L1436,135.8"/><path d="M1432.8,129.9 H1442.2 V139.1 Z"/></g>
<g fill="none" stroke="#000" stroke-linecap="round" stroke-linejoin="round" stroke-width="2.15"><path d="M1718.6,164.6 L1724.9,142.4 Q1725.6,140.4 1727.6,139.8 L1735.4,137.4 L1743.2,129.6 Q1744.6,128.3 1746,129.6 L1753.6,137 Q1755,138.4 1753.6,139.8 L1746.4,147.4 L1743.8,156.8 Q1743.2,158.8 1741.2,159.6 L1720.6,166.8 Z"/><path d="M1735.4,137.6 L1746.2,147.6"/><path d="M1719.4,164.6 L1729.4,154.6"/><circle cx="1732.4" cy="151.7" r="3.6"/></g>
<g fill="none" stroke="#000" stroke-linecap="round" stroke-linejoin="round" stroke-width="2.3"><rect x="2003.3" y="129.5" width="42.3" height="27" rx="2.6"/><path d="M2021,157.3 L2019.6,165.8 M2027.6,157.3 L2029,165.8 M2013.4,166.4 H2035.6"/><path d="M2021,157.6 H2027.6" stroke-width="2.8"/></g>
<g fill="none" stroke="#000" stroke-linecap="round" stroke-linejoin="round" stroke-width="2.05"><path d="M2390.4,151.5 V131.9 A17.4,17.4 0 1 0 2402.4,163.4 Z"/><path d="M2396.5,145.6 V129.4 A16.1,16.1 0 0 1 2412.6,145.6 Z"/><path d="M2398.8,151.5 H2415.4 A17,17 0 0 1 2410,161.8 Z"/></g>
<path fill="none" stroke="#000" stroke-linecap="round" stroke-linejoin="round" stroke-width="2.0" d="M42.2,611.6 H67.2 Q66.2,605 66.8,599.6 Q65.6,598.4 64.2,599.2 A4.5,4.5 0 1 1 64.4,593.6 Q65.8,594.6 66.8,593.2 Q66,587 66.8,580.8 Q63.6,581.6 61.2,582.2 Q57.4,582.6 57.9,579.6 A5,5 0 1 0 52.9,579.6 Q53.4,582.6 49.6,582.2 Q46,581.6 42.4,580.8 Q43,587 42.8,592.8 Q41.8,594.4 40.4,593.8 A4.5,4.5 0 1 0 40.6,599.2 Q42,598.6 42.8,600.4 Q43.2,606 42.2,611.6 Z"/>
<g fill="none" stroke="#000" stroke-linecap="round" stroke-linejoin="round" stroke-width="2.2"><rect x="29.2" y="962.8" width="9.9" height="12.7" rx="2"/><rect x="56.8" y="945.3" width="9.8" height="10.1" rx="2"/><rect x="56.8" y="964.1" width="9.8" height="10.1" rx="2"/><rect x="56.8" y="983" width="9.8" height="10" rx="2"/><path d="M56.8,950.5 H49 Q46.7,950.5 46.7,952.8 V985.3 Q46.7,987.6 49,987.6 H56.8"/><path d="M39.1,969 H56.8"/></g>
<g fill="none" stroke="#000" stroke-linecap="round" stroke-linejoin="round" stroke-width="2.2"><path d="M40,1160.5 H35.2 Q32.7,1160.5 32.7,1163 V1195.2 Q32.7,1197.7 35.2,1197.7 H40 Z"/><path d="M40,1162.9 H62.1 Q65.1,1162.9 65.1,1165.9 V1192.3 Q65.1,1195.3 62.1,1195.3 H40"/><path d="M47.7,1175.2 V1182.9"/></g>
<g fill="none" stroke="#d38d5a" stroke-linecap="round" stroke-linejoin="round" stroke-width="2.1"><path d="M37.3,1350.4 H61"/><path d="M37.3,1382.9 H61"/><ellipse cx="37.3" cy="1366.65" rx="7.1" ry="16.25"/><path d="M45.4,1350.4 A7.1,16.25 0 0 1 45.4,1382.9"/><path d="M53.1,1350.4 A7.1,16.25 0 0 1 53.1,1382.9"/><path d="M60.8,1350.4 A7.1,16.25 0 0 1 60.8,1382.9"/></g>
<g fill="none" stroke="#000" stroke-linecap="round" stroke-linejoin="round" stroke-width="2.4"><path d="M564.2,1459.8 L580.1,1476 M580.1,1459.8 L564.2,1476"/></g>
<g fill="none" stroke="#fff" stroke-linecap="butt" stroke-linejoin="miter" stroke-width="2.2"><path d="M2315.6,1466 A14.4,14.4 0 0 1 2343,1459.6"/><path d="M2344.5,1451.8 V1462.2 H2334.3"/><path d="M2344.4,1467.6 A14.4,14.4 0 0 1 2317,1474.3"/><path d="M2315.4,1482 V1471.8 H2325.4"/></g>
<g transform="translate(0,0)">
<g fill="none" stroke="#64bc54" stroke-width="1.6" stroke-linejoin="round"><rect x="310.9" y="286.7" width="22.8" height="13.9" rx="1.8"/><path d="M314.4,286.5 V283 A7.85,7.85 0 0 1 330.1,283 V286.5"/></g>
<g fill="none" stroke="#000" stroke-linecap="round" stroke-linejoin="round" stroke-width="1.95"><rect x="2379.2" y="272" width="33.6" height="28.9" rx="2.5"/><path d="M2392,279.7 H2406.6 M2392,286.4 H2406.6 M2392,293.2 H2406.6" stroke-width="2.4"/></g>
<g fill="#000"><circle cx="2386.9" cy="279.7" r="2.2"/><circle cx="2386.9" cy="286.4" r="2.2"/><circle cx="2386.9" cy="293.2" r="2.2"/></g>
<g fill="none" stroke="#000" stroke-width="1.9" stroke-linejoin="round" stroke-linecap="round"><path d="M2431.4,300.6 C2425.8,296.4 2424,290.5 2425.6,285.6 C2427.4,280.4 2433.4,278.6 2442.4,278.4 L2443.1,271.8 L2456.3,284.2 L2443.3,296.6 L2443.1,289.3 C2436.4,289.4 2432.6,290.6 2431.8,293.6 C2431.3,295.6 2431.8,298 2432.2,299.8 Z"/><path d="M2450.9,271.8 L2462.8,284.2 L2450.9,296.6"/></g>
<g fill="none" stroke="#000" stroke-linecap="round" stroke-linejoin="round" stroke-width="2.0"><path d="M2470.8,273.9 H2501"/><path d="M2479,273.1 L2481.7,269.6 H2489.4 L2492.2,273.1"/><path d="M2473.1,274.2 V300.6 Q2473.1,303.1 2475.6,303.1 H2495.3 Q2497.8,303.1 2497.8,300.6 V274.2"/><path d="M2480,279.4 V298 M2485.8,279.4 V298 M2491.4,279.4 V298"/></g>
</g>
<g transform="translate(0,55)">
<g fill="none" stroke="#64bc54" stroke-width="1.6" stroke-linejoin="round"><rect x="310.9" y="286.7" width="22.8" height="13.9" rx="1.8"/><path d="M314.4,286.5 V283 A7.85,7.85 0 0 1 330.1,283 V286.5"/></g>
<g fill="none" stroke="#000" stroke-linecap="round" stroke-linejoin="round" stroke-width="1.95"><rect x="2379.2" y="272" width="33.6" height="28.9" rx="2.5"/><path d="M2392,279.7 H2406.6 M2392,286.4 H2406.6 M2392,293.2 H2406.6" stroke-width="2.4"/></g>
<g fill="#000"><circle cx="2386.9" cy="279.7" r="2.2"/><circle cx="2386.9" cy="286.4" r="2.2"/><circle cx="2386.9" cy="293.2" r="2.2"/></g>
<g fill="none" stroke="#000" stroke-width="1.9" stroke-linejoin="round" stroke-linecap="round"><path d="M2431.4,300.6 C2425.8,296.4 2424,290.5 2425.6,285.6 C2427.4,280.4 2433.4,278.6 2442.4,278.4 L2443.1,271.8 L2456.3,284.2 L2443.3,296.6 L2443.1,289.3 C2436.4,289.4 2432.6,290.6 2431.8,293.6 C2431.3,295.6 2431.8,298 2432.2,299.8 Z"/><path d="M2450.9,271.8 L2462.8,284.2 L2450.9,296.6"/></g>
<g fill="none" stroke="#000" stroke-linecap="round" stroke-linejoin="round" stroke-width="2.0"><path d="M2470.8,273.9 H2501"/><path d="M2479,273.1 L2481.7,269.6 H2489.4 L2492.2,273.1"/><path d="M2473.1,274.2 V300.6 Q2473.1,303.1 2475.6,303.1 H2495.3 Q2497.8,303.1 2497.8,300.6 V274.2"/><path d="M2480,279.4 V298 M2485.8,279.4 V298 M2491.4,279.4 V298"/></g>
</g>
<g transform="translate(0,110)">
<g fill="none" stroke="#64bc54" stroke-width="1.6" stroke-linejoin="round"><rect x="310.9" y="286.7" width="22.8" height="13.9" rx="1.8"/><path d="M314.4,286.5 V283 A7.85,7.85 0 0 1 330.1,283 V286.5"/></g>
<g fill="none" stroke="#000" stroke-linecap="round" stroke-linejoin="round" stroke-width="1.95"><rect x="2379.2" y="272" width="33.6" height="28.9" rx="2.5"/><path d="M2392,279.7 H2406.6 M2392,286.4 H2406.6 M2392,293.2 H2406.6" stroke-width="2.4"/></g>
<g fill="#000"><circle cx="2386.9" cy="279.7" r="2.2"/><circle cx="2386.9" cy="286.4" r="2.2"/><circle cx="2386.9" cy="293.2" r="2.2"/></g>
<g fill="none" stroke="#000" stroke-width="1.9" stroke-linejoin="round" stroke-linecap="round"><path d="M2431.4,300.6 C2425.8,296.4 2424,290.5 2425.6,285.6 C2427.4,280.4 2433.4,278.6 2442.4,278.4 L2443.1,271.8 L2456.3,284.2 L2443.3,296.6 L2443.1,289.3 C2436.4,289.4 2432.6,290.6 2431.8,293.6 C2431.3,295.6 2431.8,298 2432.2,299.8 Z"/><path d="M2450.9,271.8 L2462.8,284.2 L2450.9,296.6"/></g>
<g fill="none" stroke="#000" stroke-linecap="round" stroke-linejoin="round" stroke-width="2.0"><path d="M2470.8,273.9 H2501"/><path d="M2479,273.1 L2481.7,269.6 H2489.4 L2492.2,273.1"/><path d="M2473.1,274.2 V300.6 Q2473.1,303.1 2475.6,303.1 H2495.3 Q2497.8,303.1 2497.8,300.6 V274.2"/><path d="M2480,279.4 V298 M2485.8,279.4 V298 M2491.4,279.4 V298"/></g>
</g>
<g transform="translate(0,165)">
<g fill="none" stroke="#64bc54" stroke-width="1.6" stroke-linejoin="round"><rect x="310.9" y="286.7" width="22.8" height="13.9" rx="1.8"/><path d="M314.4,286.5 V283 A7.85,7.85 0 0 1 330.1,283 V286.5"/></g>
<g fill="none" stroke="#000" stroke-linecap="round" stroke-linejoin="round" stroke-width="1.95"><rect x="2379.2" y="272" width="33.6" height="28.9" rx="2.5"/><path d="M2392,279.7 H2406.6 M2392,286.4 H2406.6 M2392,293.2 H2406.6" stroke-width="2.4"/></g>
<g fill="#000"><circle cx="2386.9" cy="279.7" r="2.2"/><circle cx="2386.9" cy="286.4" r="2.2"/><circle cx="2386.9" cy="293.2" r="2.2"/></g>
<g fill="none" stroke="#000" stroke-width="1.9" stroke-linejoin="round" stroke-linecap="round"><path d="M2431.4,300.6 C2425.8,296.4 2424,290.5 2425.6,285.6 C2427.4,280.4 2433.4,278.6 2442.4,278.4 L2443.1,271.8 L2456.3,284.2 L2443.3,296.6 L2443.1,289.3 C2436.4,289.4 2432.6,290.6 2431.8,293.6 C2431.3,295.6 2431.8,298 2432.2,299.8 Z"/><path d="M2450.9,271.8 L2462.8,284.2 L2450.9,296.6"/></g>
<g fill="none" stroke="#000" stroke-linecap="round" stroke-linejoin="round" stroke-width="2.0"><path d="M2470.8,273.9 H2501"/><path d="M2479,273.1 L2481.7,269.6 H2489.4 L2492.2,273.1"/><path d="M2473.1,274.2 V300.6 Q2473.1,303.1 2475.6,303.1 H2495.3 Q2497.8,303.1 2497.8,300.6 V274.2"/><path d="M2480,279.4 V298 M2485.8,279.4 V298 M2491.4,279.4 V298"/></g>
</g>
<g transform="translate(0,220)">
<g fill="none" stroke="#64bc54" stroke-width="1.6" stroke-linejoin="round"><rect x="310.9" y="286.7" width="22.8" height="13.9" rx="1.8"/><path d="M314.4,286.5 V283 A7.85,7.85 0 0 1 330.1,283 V286.5"/></g>
<g fill="none" stroke="#000" stroke-linecap="round" stroke-linejoin="round" stroke-width="1.95"><rect x="2379.2" y="272" width="33.6" height="28.9" rx="2.5"/><path d="M2392,279.7 H2406.6 M2392,286.4 H2406.6 M2392,293.2 H2406.6" stroke-width="2.4"/></g>
<g fill="#000"><circle cx="2386.9" cy="279.7" r="2.2"/><circle cx="2386.9" cy="286.4" r="2.2"/><circle cx="2386.9" cy="293.2" r="2.2"/></g>
<g fill="none" stroke="#000" stroke-width="1.9" stroke-linejoin="round" stroke-linecap="round"><path d="M2431.4,300.6 C2425.8,296.4 2424,290.5 2425.6,285.6 C2427.4,280.4 2433.4,278.6 2442.4,278.4 L2443.1,271.8 L2456.3,284.2 L2443.3,296.6 L2443.1,289.3 C2436.4,289.4 2432.6,290.6 2431.8,293.6 C2431.3,295.6 2431.8,298 2432.2,299.8 Z"/><path d="M2450.9,271.8 L2462.8,284.2 L2450.9,296.6"/></g>
<g fill="none" stroke="#000" stroke-linecap="round" stroke-linejoin="round" stroke-width="2.0"><path d="M2470.8,273.9 H2501"/><path d="M2479,273.1 L2481.7,269.6 H2489.4 L2492.2,273.1"/><path d="M2473.1,274.2 V300.6 Q2473.1,303.1 2475.6,303.1 H2495.3 Q2497.8,303.1 2497.8,300.6 V274.2"/><path d="M2480,279.4 V298 M2485.8,279.4 V298 M2491.4,279.4 V298"/></g>
</g>
<g transform="translate(0,275)">
<g fill="none" stroke="#64bc54" stroke-width="1.6" stroke-linejoin="round"><rect x="310.9" y="286.7" width="22.8" height="13.9" rx="1.8"/><path d="M314.4,286.5 V283 A7.85,7.85 0 0 1 330.1,283 V286.5"/></g>
<g fill="none" stroke="#000" stroke-linecap="round" stroke-linejoin="round" stroke-width="1.95"><rect x="2379.2" y="272" width="33.6" height="28.9" rx="2.5"/><path d="M2392,279.7 H2406.6 M2392,286.4 H2406.6 M2392,293.2 H2406.6" stroke-width="2.4"/></g>
<g fill="#000"><circle cx="2386.9" cy="279.7" r="2.2"/><circle cx="2386.9" cy="286.4" r="2.2"/><circle cx="2386.9" cy="293.2" r="2.2"/></g>
<g fill="none" stroke="#000" stroke-width="1.9" stroke-linejoin="round" stroke-linecap="round"><path d="M2431.4,300.6 C2425.8,296.4 2424,290.5 2425.6,285.6 C2427.4,280.4 2433.4,278.6 2442.4,278.4 L2443.1,271.8 L2456.3,284.2 L2443.3,296.6 L2443.1,289.3 C2436.4,289.4 2432.6,290.6 2431.8,293.6 C2431.3,295.6 2431.8,298 2432.2,299.8 Z"/><path d="M2450.9,271.8 L2462.8,284.2 L2450.9,296.6"/></g>
<g fill="none" stroke="#000" stroke-linecap="round" stroke-linejoin="round" stroke-width="2.0"><path d="M2470.8,273.9 H2501"/><path d="M2479,273.1 L2481.7,269.6 H2489.4 L2492.2,273.1"/><path d="M2473.1,274.2 V300.6 Q2473.1,303.1 2475.6,303.1 H2495.3 Q2497.8,303.1 2497.8,300.6 V274.2"/><path d="M2480,279.4 V298 M2485.8,279.4 V298 M2491.4,279.4 V298"/></g>
</g>
<g transform="translate(0,330)">
<g fill="none" stroke="#64bc54" stroke-width="1.6" stroke-linejoin="round"><rect x="310.9" y="286.7" width="22.8" height="13.9" rx="1.8"/><path d="M314.4,286.5 V283 A7.85,7.85 0 0 1 330.1,283 V286.5"/></g>
<g fill="none" stroke="#000" stroke-linecap="round" stroke-linejoin="round" stroke-width="1.95"><rect x="2379.2" y="272" width="33.6" height="28.9" rx="2.5"/><path d="M2392,279.7 H2406.6 M2392,286.4 H2406.6 M2392,293.2 H2406.6" stroke-width="2.4"/></g>
<g fill="#000"><circle cx="2386.9" cy="279.7" r="2.2"/><circle cx="2386.9" cy="286.4" r="2.2"/><circle cx="2386.9" cy="293.2" r="2.2"/></g>
<g fill="none" stroke="#000" stroke-width="1.9" stroke-linejoin="round" stroke-linecap="round"><path d="M2431.4,300.6 C2425.8,296.4 2424,290.5 2425.6,285.6 C2427.4,280.4 2433.4,278.6 2442.4,278.4 L2443.1,271.8 L2456.3,284.2 L2443.3,296.6 L2443.1,289.3 C2436.4,289.4 2432.6,290.6 2431.8,293.6 C2431.3,295.6 2431.8,298 2432.2,299.8 Z"/><path d="M2450.9,271.8 L2462.8,284.2 L2450.9,296.6"/></g>
<g fill="none" stroke="#000" stroke-linecap="round" stroke-linejoin="round" stroke-width="2.0"><path d="M2470.8,273.9 H2501"/><path d="M2479,273.1 L2481.7,269.6 H2489.4 L2492.2,273.1"/><path d="M2473.1,274.2 V300.6 Q2473.1,303.1 2475.6,303.1 H2495.3 Q2497.8,303.1 2497.8,300.6 V274.2"/><path d="M2480,279.4 V298 M2485.8,279.4 V298 M2491.4,279.4 V298"/></g>
</g>
<g transform="translate(0,385)">
<g fill="none" stroke="#64bc54" stroke-width="1.6" stroke-linejoin="round"><rect x="310.9" y="286.7" width="22.8" height="13.9" rx="1.8"/><path d="M314.4,286.5 V283 A7.85,7.85 0 0 1 330.1,283 V286.5"/></g>
<g fill="none" stroke="#000" stroke-linecap="round" stroke-linejoin="round" stroke-width="1.95"><rect x="2379.2" y="272" width="33.6" height="28.9" rx="2.5"/><path d="M2392,279.7 H2406.6 M2392,286.4 H2406.6 M2392,293.2 H2406.6" stroke-width="2.4"/></g>
<g fill="#000"><circle cx="2386.9" cy="279.7" r="2.2"/><circle cx="2386.9" cy="286.4" r="2.2"/><circle cx="2386.9" cy="293.2" r="2.2"/></g>
<g fill="none" stroke="#000" stroke-width="1.9" stroke-linejoin="round" stroke-linecap="round"><path d="M2431.4,300.6 C2425.8,296.4 2424,290.5 2425.6,285.6 C2427.4,280.4 2433.4,278.6 2442.4,278.4 L2443.1,271.8 L2456.3,284.2 L2443.3,296.6 L2443.1,289.3 C2436.4,289.4 2432.6,290.6 2431.8,293.6 C2431.3,295.6 2431.8,298 2432.2,299.8 Z"/><path d="M2450.9,271.8 L2462.8,284.2 L2450.9,296.6"/></g>
<g fill="none" stroke="#000" stroke-linecap="round" stroke-linejoin="round" stroke-width="2.0"><path d="M2470.8,273.9 H2501"/><path d="M2479,273.1 L2481.7,269.6 H2489.4 L2492.2,273.1"/><path d="M2473.1,274.2 V300.6 Q2473.1,303.1 2475.6,303.1 H2495.3 Q2497.8,303.1 2497.8,300.6 V274.2"/><path d="M2480,279.4 V298 M2485.8,279.4 V298 M2491.4,279.4 V298"/></g>
</g>
<g transform="translate(0,440)">
<g fill="none" stroke="#64bc54" stroke-width="1.6" stroke-linejoin="round"><rect x="310.9" y="286.7" width="22.8" height="13.9" rx="1.8"/><path d="M314.4,286.5 V283 A7.85,7.85 0 0 1 330.1,283 V286.5"/></g>
<g fill="none" stroke="#000" stroke-linecap="round" stroke-linejoin="round" stroke-width="1.95"><rect x="2379.2" y="272" width="33.6" height="28.9" rx="2.5"/><path d="M2392,279.7 H2406.6 M2392,286.4 H2406.6 M2392,293.2 H2406.6" stroke-width="2.4"/></g>
<g fill="#000"><circle cx="2386.9" cy="279.7" r="2.2"/><circle cx="2386.9" cy="286.4" r="2.2"/><circle cx="2386.9" cy="293.2" r="2.2"/></g>
<g fill="none" stroke="#000" stroke-width="1.9" stroke-linejoin="round" stroke-linecap="round"><path d="M2431.4,300.6 C2425.8,296.4 2424,290.5 2425.6,285.6 C2427.4,280.4 2433.4,278.6 2442.4,278.4 L2443.1,271.8 L2456.3,284.2 L2443.3,296.6 L2443.1,289.3 C2436.4,289.4 2432.6,290.6 2431.8,293.6 C2431.3,295.6 2431.8,298 2432.2,299.8 Z"/><path d="M2450.9,271.8 L2462.8,284.2 L2450.9,296.6"/></g>
<g fill="none" stroke="#000" stroke-linecap="round" stroke-linejoin="round" stroke-width="2.0"><path d="M2470.8,273.9 H2501"/><path d="M2479,273.1 L2481.7,269.6 H2489.4 L2492.2,273.1"/><path d="M2473.1,274.2 V300.6 Q2473.1,303.1 2475.6,303.1 H2495.3 Q2497.8,303.1 2497.8,300.6 V274.2"/><path d="M2480,279.4 V298 M2485.8,279.4 V298 M2491.4,279.4 V298"/></g>
</g>
<g transform="translate(0,495)">
<g fill="none" stroke="#64bc54" stroke-width="1.6" stroke-linejoin="round"><rect x="310.9" y="286.7" width="22.8" height="13.9" rx="1.8"/><path d="M314.4,286.5 V283 A7.85,7.85 0 0 1 330.1,283 V286.5"/></g>
<g fill="none" stroke="#000" stroke-linecap="round" stroke-linejoin="round" stroke-width="1.95"><rect x="2379.2" y="272" width="33.6" height="28.9" rx="2.5"/><path d="M2392,279.7 H2406.6 M2392,286.4 H2406.6 M2392,293.2 H2406.6" stroke-width="2.4"/></g>
<g fill="#000"><circle cx="2386.9" cy="279.7" r="2.2"/><circle cx="2386.9" cy="286.4" r="2.2"/><circle cx="2386.9" cy="293.2" r="2.2"/></g>
<g fill="none" stroke="#aaaaaa" stroke-width="1.9" stroke-linejoin="round" stroke-linecap="round"><path d="M2431.4,300.6 C2425.8,296.4 2424,290.5 2425.6,285.6 C2427.4,280.4 2433.4,278.6 2442.4,278.4 L2443.1,271.8 L2456.3,284.2 L2443.3,296.6 L2443.1,289.3 C2436.4,289.4 2432.6,290.6 2431.8,293.6 C2431.3,295.6 2431.8,298 2432.2,299.8 Z"/><path d="M2450.9,271.8 L2462.8,284.2 L2450.9,296.6"/></g>
<g fill="none" stroke="#000" stroke-linecap="round" stroke-linejoin="round" stroke-width="2.0"><path d="M2470.8,273.9 H2501"/><path d="M2479,273.1 L2481.7,269.6 H2489.4 L2492.2,273.1"/><path d="M2473.1,274.2 V300.6 Q2473.1,303.1 2475.6,303.1 H2495.3 Q2497.8,303.1 2497.8,300.6 V274.2"/><path d="M2480,279.4 V298 M2485.8,279.4 V298 M2491.4,279.4 V298"/></g>
</g>
</svg>
</body></html>
